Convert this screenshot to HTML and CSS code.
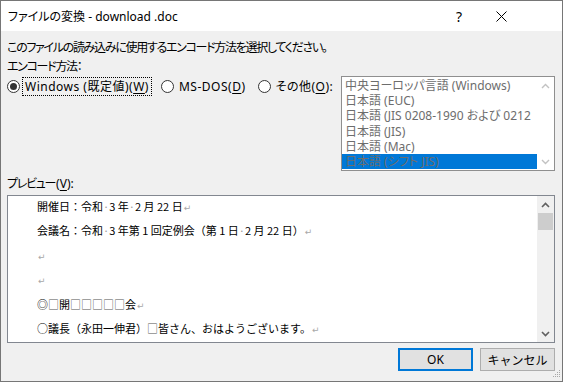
FILE: index.html
```html
<!DOCTYPE html>
<html lang="ja">
<head>
  <meta charset="UTF-8" />
  <title>ファイルの変換</title>
  <link rel="stylesheet" href="styles.css">
</head>
<body>

  <div class="window">
    <div class="titlebar">
      <span class="title">ファイルの変換 - download .doc</span>
      <span class="help">?</span>
      <span class="close">
        <svg width="11" height="11" viewBox="0 0 11 11"><path d="M0.5 0.5L10.5 10.5M10.5 0.5L0.5 10.5" stroke="#000" stroke-width="1" fill="none"/></svg>
      </span>
    </div>

    <div class="content">
      <p class="line tight">このファイルの読み込みに使用するエンコード方法を選択してください。</p>
      <p class="line tight">エンコード方法：</p>

      <div class="encoding">
        <div class="radios">
          <div class="radio checked"><span class="circle"></span><span class="caption focus">Windows (既定値)(<u>W</u>)</span></div>
          <div class="radio"><span class="circle"></span><span class="caption">MS-DOS(<u>D</u>)</span></div>
          <div class="radio"><span class="circle"></span><span class="caption">その他(<u>O</u>):</span></div>
        </div>

        <div class="listbox">
          <ul class="items">
            <li>中央ヨーロッパ言語 (Windows)</li>
            <li>日本語 (EUC)</li>
            <li>日本語 (JIS 0208-1990 および 0212</li>
            <li>日本語 (JIS)</li>
            <li>日本語 (Mac)</li>
            <li class="selected">日本語 (シフト JIS)</li>
          </ul>
          <div class="vscroll off">
            <span class="arrow"><svg width="9" height="6" viewBox="0 0 9 6"><path d="M1 5L4.5 1.5L8 5" stroke="#c2c2c2" stroke-width="1.4" fill="none"/></svg></span>
            <span class="track"></span>
            <span class="arrow"><svg width="9" height="6" viewBox="0 0 9 6"><path d="M1 1L4.5 4.5L8 1" stroke="#c2c2c2" stroke-width="1.4" fill="none"/></svg></span>
          </div>
        </div>
      </div>

      <p class="line tight preview-label">プレビュー<span class="key">(<u>V</u>):</span></p>

      <div class="preview">
        <div class="doc">
          <div class="para">開催日：令和<span class="sp">·</span>3 年<span class="sp">·</span>2 月 22 日<span class="ret">↵</span></div>
          <div class="para">会議名：令和<span class="sp">·</span>3 年第 1 回定例会（第 1 日<span class="sp">·</span>2 月 22 日）<span class="ret">↵</span></div>
          <div class="para"><span class="ret">↵</span></div>
          <div class="para"><span class="ret">↵</span></div>
          <div class="para">◎<span class="fs">□</span>開<span class="fs">□□□□□</span>会<span class="ret">↵</span></div>
          <div class="para">○議長（永田一伸君）<span class="fs">□</span>皆さん、おはようございます。<span class="ret">↵</span></div>
        </div>
        <div class="vscroll">
          <span class="arrow"><svg width="9" height="6" viewBox="0 0 9 6"><path d="M1 5L4.5 1.5L8 5" stroke="#606060" stroke-width="1.6" fill="none"/></svg></span>
          <span class="thumb"></span>
          <span class="track"></span>
          <span class="arrow"><svg width="9" height="6" viewBox="0 0 9 6"><path d="M1 1L4.5 4.5L8 1" stroke="#606060" stroke-width="1.6" fill="none"/></svg></span>
        </div>
      </div>

      <div class="buttons">
        <button class="btn default">OK</button>
        <button class="btn">キャンセル</button>
      </div>
    </div>

    <svg class="grip" width="10" height="10" viewBox="0 0 10 10">
      <rect x="8" y="0" width="1" height="1" fill="#a8a8a8"/>
      <rect x="6" y="2" width="1" height="1" fill="#a8a8a8"/>
      <rect x="8" y="2" width="1" height="1" fill="#a8a8a8"/>
      <rect x="4" y="4" width="1" height="1" fill="#a8a8a8"/>
      <rect x="6" y="4" width="1" height="1" fill="#a8a8a8"/>
      <rect x="8" y="4" width="1" height="1" fill="#a8a8a8"/>
      <rect x="2" y="6" width="1" height="1" fill="#a8a8a8"/>
      <rect x="4" y="6" width="1" height="1" fill="#a8a8a8"/>
      <rect x="6" y="6" width="1" height="1" fill="#a8a8a8"/>
      <rect x="8" y="6" width="1" height="1" fill="#a8a8a8"/>
    </svg>
  </div>

</body>
</html>
```

FILE: styles.css
```css
* {
  box-sizing: border-box;
}
body {
  margin: 0;
  font-family: "Noto Sans", "Noto Sans CJK JP", sans-serif;
  font-size: 12px;
  color: #000;
  font-feature-settings: "palt";
}
.window {
  position: relative;
  width: 563px;
  height: 382px;
  border: 1px solid #767676;
  background: #f0f0f0;
  display: flex;
  flex-direction: column;
}
.titlebar {
  height: 30px;
  background: #fff;
  display: flex;
  align-items: center;
  padding-left: 7px;
  padding-right: 40px;
}
.title {
  flex: 1;
  white-space: nowrap;
}
.help, .close {
  width: 42px;
  display: flex;
  justify-content: center;
  align-items: center;
}
.help {
  font-size: 14px;
}
.content {
  flex: 1;
  padding: 7px 7px 0 6px;
}
.line {
  margin: 0;
  line-height: 19px;
  white-space: nowrap;
}
.tight {
  letter-spacing: -1.3px;
}
.key {
  letter-spacing: 0;
  margin-left: 1px;
}
u {
  text-decoration-thickness: 1px;
  text-underline-offset: 2px;
}

/* encoding row */
.encoding {
  display: flex;
  align-items: flex-start;
  height: 95px;
}
.radios {
  display: flex;
  margin-top: 1px;
}
.radio {
  display: flex;
  align-items: center;
  height: 19px;
  margin-right: 9px;
}
.radio:last-child {
  margin-right: 0;
}
.circle {
  width: 13px;
  height: 13px;
  border: 1px solid #333;
  border-radius: 50%;
  background: #fff;
  margin-right: 2px;
  display: flex;
  align-items: center;
  justify-content: center;
}
.radio.checked .circle::after {
  content: "";
  width: 7px;
  height: 7px;
  border-radius: 50%;
  background: #333;
}
.caption {
  border: 1px dotted transparent;
  padding: 0 2px;
  line-height: 17px;
  letter-spacing: 0.5px;
  white-space: nowrap;
}
.caption.focus {
  border-color: #000;
}
.listbox {
  margin-left: auto;
  width: 214px;
  height: 95px;
  border: 1px solid #8f8f8f;
  background: #fff;
  display: flex;
}
.items {
  list-style: none;
  margin: 0;
  padding: 1px 0 0;
  flex: 1;
  overflow: hidden;
  color: #6d6d6d;
}
.items li {
  height: 15.2px;
  line-height: 15.2px;
  padding-left: 3px;
  white-space: nowrap;
  overflow: hidden;
}
.items li.selected {
  background: #0078d7;
}
.vscroll {
  width: 17px;
  display: flex;
  flex-direction: column;
  background: #f0f0f0;
}
.vscroll.off {
  background: #fff;
}
.arrow {
  height: 17px;
  display: flex;
  align-items: center;
  justify-content: center;
}
.track {
  flex: 1;
}
.thumb {
  height: 17px;
  margin: 0 1px;
  background: #cdcdcd;
}

/* preview */
.preview-label {
  margin-top: 3px;
}
.preview {
  margin-top: 2px;
  height: 148px;
  border: 1px solid #828790;
  background: #fff;
  display: flex;
}
.doc {
  flex: 1;
  padding-left: 29px;
  font-family: "Noto Sans CJK JP", sans-serif;
  font-feature-settings: normal;
  font-size: 11px;
  overflow: hidden;
}
.para {
  height: 24.4px;
  line-height: 20px;
  white-space: nowrap;
}
.sp {
  color: #9a9a9a;
}
.fs {
  color: #555;
}
.ret {
  color: #a8a8a8;
  font-family: "DejaVu Sans", sans-serif;
  font-size: 9px;
  margin-left: 1px;
}

/* buttons */
.buttons {
  display: flex;
  justify-content: flex-end;
  gap: 7px;
  margin-top: 5px;
}
.btn {
  width: 75px;
  height: 23px;
  padding: 0;
  font-family: "Noto Sans", "Noto Sans CJK JP", sans-serif;
  font-size: 12px;
  color: #000;
  background: #e1e1e1;
  border: 1px solid #adadad;
}
.btn.default {
  border: 2px solid #0078d7;
}
.grip {
  position: absolute;
  right: 1px;
  bottom: 1px;
}
```
